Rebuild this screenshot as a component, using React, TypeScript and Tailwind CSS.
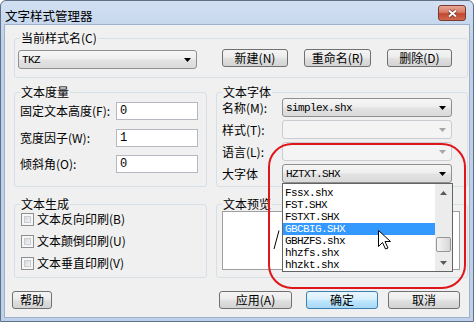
import React from 'react';

const DownArrow = ({ disabled }: { disabled?: boolean }) => (
  <svg width="7" height="4" viewBox="0 0 7 4" className={disabled ? 'fill-[#a6a6a6]' : 'fill-black'}>
    <path d="M0 0h7L3.5 4z" />
  </svg>
);

const UpArrow = () => (
  <svg width="7" height="4" viewBox="0 0 7 4" className="fill-[#5a5a5a]">
    <path d="M0 4h7L3.5 0z" />
  </svg>
);

interface ComboProps {
  value?: string;
  className?: string;
  disabled?: boolean;
  children?: React.ReactNode;
}

const Combo: React.FC<ComboProps> = ({ value, className = '', disabled, children }) => (
  <div
    className={`relative flex h-[19px] shrink-0 items-center justify-between rounded-[3px] border pl-[3px] pr-[5px] ${
      disabled
        ? 'border-[#c9cdd1] bg-[#f4f4f4]'
        : 'border-[#8f8f8f] bg-[linear-gradient(#f6f6f6,#eeeeee_45%,#e2e2e2_55%,#dadada)]'
    } ${className}`}
  >
    <span className="font-['Liberation_Mono',monospace] text-[11px] tracking-[-0.6px] text-black">{value}</span>
    <DownArrow disabled={disabled} />
    {children}
  </div>
);

const Btn: React.FC<{ className?: string; primary?: boolean; children: React.ReactNode }> = ({ className = '', primary, children }) => (
  <button
    className={`flex h-[18px] shrink-0 items-center justify-center rounded-[3px] border text-[12px] leading-[12px] ${
      primary
        ? 'border-[#3c7fb1] bg-[linear-gradient(#eaf6fd,#d9f0fc_45%,#bee6fd_55%,#a7d9f5)]'
        : 'border-[#707070] bg-[linear-gradient(#f4f4f4,#ececec_45%,#dfdfdf_55%,#d3d3d3)]'
    } ${className}`}
  >
    {children}
  </button>
);

const Field = ({ value }: { value: string }) => (
  <div className="flex h-[18px] w-[82px] items-center border border-[#b5b8c0] bg-white pl-[3px] font-['Liberation_Mono',monospace] text-[12px]">
    {value}
  </div>
);

const Check = ({ label }: { label: string }) => (
  <div className="flex h-[22px] items-center">
    <div className="h-[13px] w-[13px] border border-[#8e8f8f] bg-[#f6f6f6] p-[2px]">
      <div className="h-full w-full border border-[#c9ccd2] bg-[linear-gradient(135deg,#d6d8dc,#f4f4f4)]" />
    </div>
    <span className="ml-[3px] whitespace-nowrap">{label}</span>
  </div>
);

const Legend = ({ children }: { children: React.ReactNode }) => (
  <legend className="ml-[5px] px-[1px] text-[12px] leading-[12px]">{children}</legend>
);

const fonts = ['Fssx.shx', 'FST.SHX', 'FSTXT.SHX', 'GBCBIG.SHX', 'GBHZFS.shx', 'hhzfs.shx', 'hhzkt.shx'];

const FontList = () => (
  <div className="absolute left-[-1px] top-[18px] z-10 flex h-[89px] w-[171px] border border-[#646464] bg-white">
    <div className="w-[152px] pt-[3px]">
      {fonts.map((f) => (
        <div
          key={f}
          className={`h-[12px] pl-[2px] font-['Liberation_Mono',monospace] text-[11px] leading-[12px] tracking-[-0.6px] ${
            f === 'GBCBIG.SHX' ? 'bg-[#3399ff] text-white' : 'text-black'
          }`}
        >
          {f}
        </div>
      ))}
    </div>
    <div className="flex w-[17px] flex-col bg-[#ececec]">
      <div className="flex h-[17px] items-center justify-center">
        <UpArrow />
      </div>
      <div className="mx-[1px] mt-[36px] h-[15px] rounded-[2px] border border-[#979797] bg-[linear-gradient(to_right,#f4f4f4,#e6e6e6_50%,#d6d6d6)]" />
      <div className="mt-auto flex h-[17px] items-center justify-center">
        <svg width="7" height="4" viewBox="0 0 7 4" className="fill-[#5a5a5a]">
          <path d="M0 0h7L3.5 4z" />
        </svg>
      </div>
    </div>
    <svg className="absolute left-[95px] top-[46px]" width="13" height="20" viewBox="0 0 13 20">
      <path d="M0.5 0.5V16.5L4.5 12.5L7.5 19L10 18L7 11.5H12.5Z" fill="white" stroke="black" strokeWidth="1" strokeLinejoin="miter" />
    </svg>
  </div>
);

export default function App() {
  return (
    <div className="h-[322px] w-[474px] overflow-hidden bg-white font-['Noto_Sans_CJK_SC',sans-serif] text-[12px] leading-[12px] text-black">
      <div className="flex h-full w-full flex-col rounded-t-[6px] border border-[#5f7188] bg-[linear-gradient(#d2e0f2,#bfd1ea_40px,#bfd1ea)]">
        {/* title bar */}
        <div className="flex h-[23px] shrink-0 items-start">
          <span className="ml-[4px] mt-[8px] text-[12.5px] leading-[13px]">文字样式管理器</span>
          <button className="ml-auto mr-[7px] mt-[4px] flex h-[16px] w-[28px] items-center justify-center rounded-[3px] border border-[#7b3a2f] bg-[linear-gradient(#eaa897,#d67b65_45%,#c4462f_55%,#d06a50)]">
            <svg width="11" height="9" viewBox="0 0 11 9">
              <path d="M2 1.5L9 7.5M9 1.5L2 7.5" stroke="#6a2a20" strokeWidth="3.4" />
              <path d="M2 1.5L9 7.5M9 1.5L2 7.5" stroke="white" strokeWidth="2" />
            </svg>
          </button>
        </div>

        {/* client */}
        <div className="relative mx-[3px] mb-[3px] flex flex-1 flex-col border border-[#9fb1c8] bg-[#f0f0f0]">
          <fieldset className="ml-[9px] mt-[7px] w-[454px] rounded-[3px] border border-[#d5dfe5]">
            <Legend>当前样式名(C)</Legend>
            <div className="flex items-start pb-[8px] pl-[3px] pt-[5px]">
              <Combo value="TKZ" className="mt-[1px] w-[179px]" />
              <Btn className="ml-[25px] w-[66px]">新建(N)</Btn>
              <Btn className="ml-[16px] w-[67px]">重命名(R)</Btn>
              <Btn className="ml-[16px] w-[65px]">删除(D)</Btn>
            </div>
          </fieldset>

          <div className="ml-[9px] mt-[8px] flex items-start gap-[9px]">
            <fieldset className="w-[193px] rounded-[3px] border border-[#d5dfe5]">
              <Legend>文本度量</Legend>
              <div className="pb-[13px] pl-[5px] pt-[4px]">
                <div className="flex items-center">
                  <span className="w-[96px] whitespace-nowrap">固定文本高度(F):</span>
                  <Field value="0" />
                </div>
                <div className="mt-[9px] flex items-center">
                  <span className="w-[96px] whitespace-nowrap">宽度因子(W):</span>
                  <Field value="1" />
                </div>
                <div className="mt-[8px] flex items-center">
                  <span className="w-[96px] whitespace-nowrap">倾斜角(O):</span>
                  <Field value="0" />
                </div>
              </div>
            </fieldset>

            <fieldset className="w-[252px] rounded-[3px] border border-[#d5dfe5]">
              <Legend>文本字体</Legend>
              <div className="flex flex-col gap-[3px] pb-[3px] pl-[5px]">
                <div className="flex items-center">
                  <span className="w-[60px] whitespace-nowrap">名称(M):</span>
                  <Combo value="simplex.shx" className="w-[170px]" />
                </div>
                <div className="flex items-center">
                  <span className="w-[60px] whitespace-nowrap">样式(T):</span>
                  <Combo disabled className="w-[170px]" />
                </div>
                <div className="flex items-center">
                  <span className="w-[60px] whitespace-nowrap">语言(L):</span>
                  <Combo disabled className="w-[170px]" />
                </div>
                <div className="flex items-center">
                  <span className="w-[60px] whitespace-nowrap">大字体</span>
                  <Combo value="HZTXT.SHX" className="w-[170px]">
                    <FontList />
                  </Combo>
                </div>
              </div>
            </fieldset>
          </div>

          <div className="ml-[9px] mt-[11px] flex items-start gap-[9px]">
            <fieldset className="w-[193px] rounded-[3px] border border-[#d5dfe5]">
              <Legend>文本生成</Legend>
              <div className="-mt-[2px] pb-[3px] pl-[6px]">
                <Check label="文本反向印刷(B)" />
                <Check label="文本颠倒印刷(U)" />
                <Check label="文本垂直印刷(V)" />
              </div>
            </fieldset>

            <fieldset className="w-[252px] rounded-[3px] border border-[#d5dfe5]">
              <Legend>文本预览</Legend>
              <div className="pb-[7px] pl-[5px] pt-[1px]">
                <div className="h-[59px] w-[238px] border border-[#a0a0a0] bg-white pl-[50px] pt-[18px]">
                  <svg width="7" height="20" viewBox="0 0 7 20">
                    <path d="M6 0.5L1 19" stroke="black" strokeWidth="1" fill="none" />
                  </svg>
                </div>
              </div>
            </fieldset>
          </div>

          <div className="mt-[13px] flex items-start">
            <Btn className="ml-[7px] w-[40px]">帮助</Btn>
            <Btn className="ml-[167px] w-[73px]">应用(A)</Btn>
            <Btn primary className="ml-[14px] w-[72px]">确定</Btn>
            <Btn className="ml-[10px] w-[72px]">取消</Btn>
          </div>

          {/* red highlight annotation */}
          <div className="pointer-events-none absolute left-[263px] top-[118px] z-20 h-[146px] w-[198px] rounded-[24px] border-2 border-[#e0161d]" />
        </div>
      </div>
    </div>
  );
}
